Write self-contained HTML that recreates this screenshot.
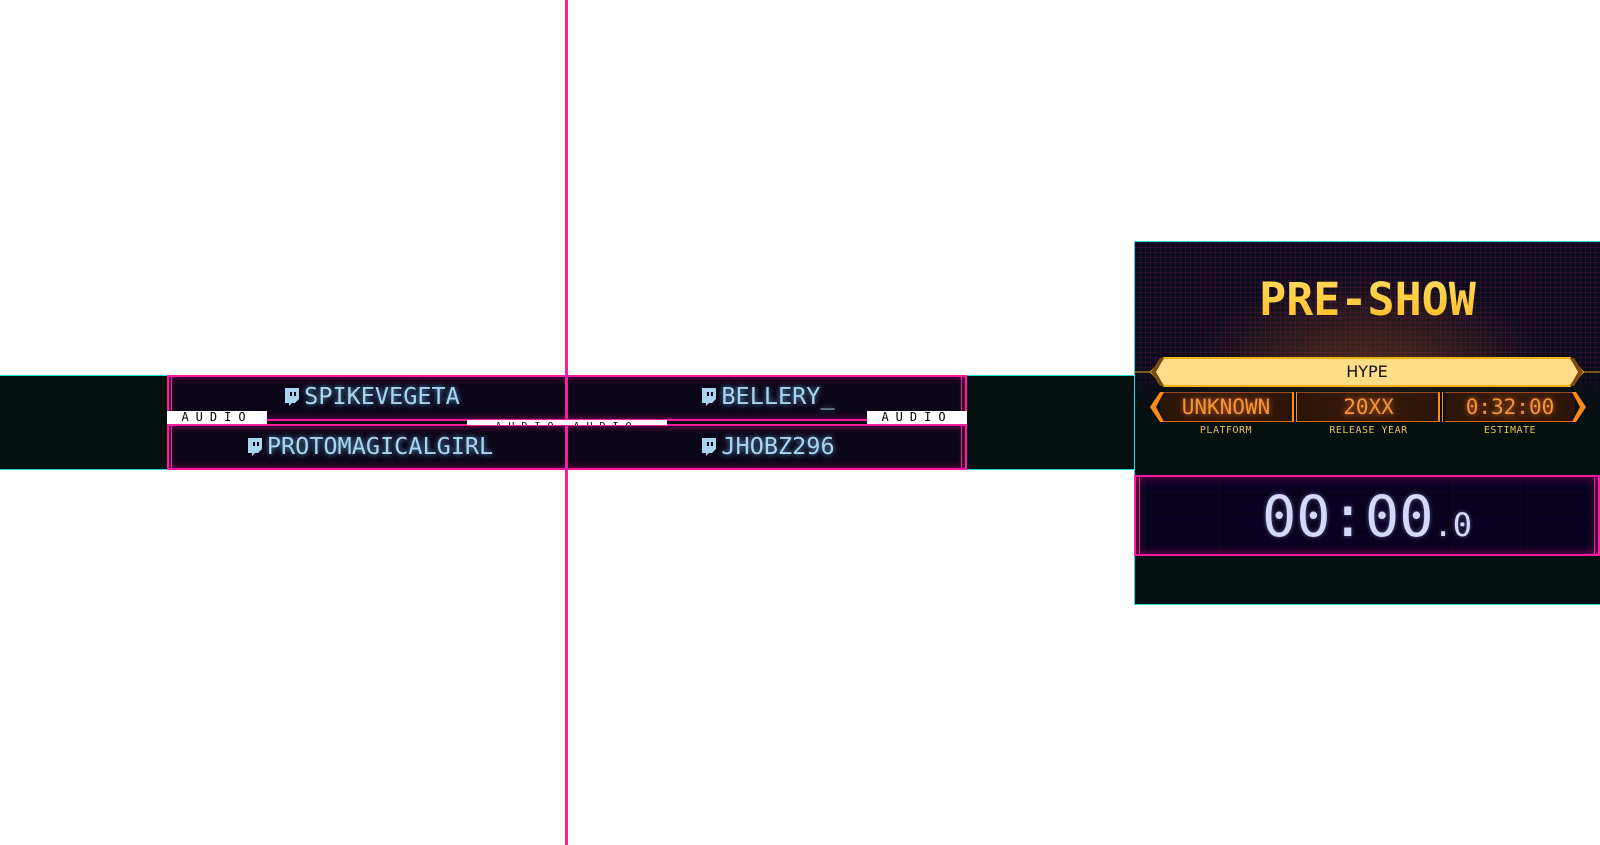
<!DOCTYPE html>
<html><head><meta charset="utf-8"><style>
*{margin:0;padding:0;box-sizing:border-box}
body{width:1600px;height:845px;background:#fff;position:relative;overflow:hidden;font-family:"DejaVu Sans Mono","Liberation Mono",monospace}
.abs{position:absolute}
.band{left:0;top:375px;width:1134px;height:95px;background:#061011;border-top:1px solid #2dd;border-bottom:1px solid #2dd}
.box{background:#0b0618;border:2px solid #ff1aa0;box-shadow:inset 0 0 8px rgba(255,0,160,.5)}
.name{color:#a9d6ee;font-size:23.5px;text-shadow:0 0 6px rgba(120,200,255,.8);display:flex;align-items:center;justify-content:center}
.name svg{margin-right:4px}
.audio{background:#fff;color:#000;font-size:12px;letter-spacing:7px;text-align:center;line-height:13px;height:13px}
.panel{left:1134px;top:241px;width:466px;height:364px;background:#061011;border:1px solid #2dd;border-right:none}
.grid{left:1135px;top:242px;width:465px;height:160px;background:
linear-gradient(rgba(255,0,200,.12) 1px,transparent 1px) 0 0/5px 5px,
linear-gradient(90deg,rgba(255,0,200,.12) 1px,transparent 1px) 0 0/5px 5px,
radial-gradient(ellipse at 50% 85%,rgba(200,110,20,.35),transparent 55%),#0b0e19;
-webkit-mask-image:linear-gradient(#000 75%,transparent)}
.cell{top:392px;height:30px;background:linear-gradient(90deg,#2a1408,#3a1c0c,#2a1408);border-top:1px solid #a04a10;border-bottom:1px solid #e06a10;color:#f3953a;font-size:21px;text-align:center;line-height:29px;text-shadow:0 0 6px rgba(255,120,30,.8)}
.lbl{top:425px;color:#e9c14a;font-size:10px;text-align:center;letter-spacing:.5px}
</style></head><body>
<div class="abs band"></div>
<div class="abs box" style="left:167px;top:375px;width:800px;height:46px"></div>
<div class="abs box" style="left:167px;top:424px;width:800px;height:46px"></div>
<div class="abs" style="left:171px;top:375px;width:1px;height:95px;background:#ff1aa0"></div>
<div class="abs" style="left:961px;top:375px;width:1px;height:95px;background:#ff1aa0"></div>
<div class="abs" style="left:565px;top:0;width:3px;height:845px;background:#ff1aa0"></div>

<div class="abs name" style="left:172px;top:380px;width:399px;height:32px"><svg width="17" height="19" viewBox="0 0 17 19"><path d="M2 1h14v11l-4 4h-3l-3 3v-3H2z" fill="#a9d6ee"/><path d="M8 5v4M12 5v4" stroke="#0b0618" stroke-width="2"/></svg>SPIKEVEGETA</div>
<div class="abs name" style="left:568px;top:380px;width:399px;height:32px"><svg width="17" height="19" viewBox="0 0 17 19"><path d="M2 1h14v11l-4 4h-3l-3 3v-3H2z" fill="#a9d6ee"/><path d="M8 5v4M12 5v4" stroke="#0b0618" stroke-width="2"/></svg>BELLERY_</div>
<div class="abs name" style="left:170px;top:430px;width:399px;height:32px"><svg width="17" height="19" viewBox="0 0 17 19"><path d="M2 1h14v11l-4 4h-3l-3 3v-3H2z" fill="#a9d6ee"/><path d="M8 5v4M12 5v4" stroke="#0b0618" stroke-width="2"/></svg>PROTOMAGICALGIRL</div>
<div class="abs name" style="left:568px;top:430px;width:399px;height:32px"><svg width="17" height="19" viewBox="0 0 17 19"><path d="M2 1h14v11l-4 4h-3l-3 3v-3H2z" fill="#a9d6ee"/><path d="M8 5v4M12 5v4" stroke="#0b0618" stroke-width="2"/></svg>JHOBZ296</div>

<div class="abs audio" style="left:167px;top:411px;width:100px">AUDIO</div>
<div class="abs audio" style="left:867px;top:411px;width:100px">AUDIO</div>
<div class="abs audio" style="left:467px;top:420px;width:200px;height:5px;overflow:hidden;font-size:10px">AUDIO AUDIO</div>

<div class="abs panel"></div>
<div class="abs grid"></div>
<div class="abs" style="left:1135px;top:268px;width:465px;text-align:center;font-size:45px;font-weight:bold;line-height:64px;background:linear-gradient(#ffe066,#ffb81c);-webkit-background-clip:text;color:transparent">PRE-SHOW</div>

<svg class="abs" style="left:1134px;top:356px" width="466" height="32">
<line x1="0" y1="16" x2="466" y2="16" stroke="#d4a020" stroke-width="1"/>
<polygon points="30,2 436,2 449,16 436,30 30,30 17,16" fill="#ffdd88" stroke="#f0b010" stroke-width="2"/>
<polygon points="30,2 22,16 30,30 26,30 17,16 26,2" fill="#7a4a10"/>
<polygon points="436,2 444,16 436,30 440,30 449,16 440,2" fill="#7a4a10"/>
</svg>
<div class="abs" style="left:1134px;top:362px;width:466px;text-align:center;font-size:16px;color:#111;font-family:'DejaVu Sans',sans-serif">HYPE</div>

<div class="abs cell" style="left:1160px;width:132px">UNKNOWN</div>
<div class="abs cell" style="left:1297px;width:143px">20XX</div>
<div class="abs cell" style="left:1445px;width:130px">0:32:00</div>
<svg class="abs" style="left:1148px;top:392px" width="440" height="30">
<polygon points="12,0 2,15 12,30 16,30 8,15 16,0" fill="#ff8a1a"/>
<polygon points="428,0 438,15 428,30 424,30 432,15 424,0" fill="#ff8a1a"/>
<rect x="144" y="0" width="2" height="30" fill="#ff8a1a"/><rect x="148" y="0" width="1" height="30" fill="#ff8a1a"/>
<rect x="290" y="0" width="2" height="30" fill="#ff8a1a"/><rect x="294" y="0" width="1" height="30" fill="#ff8a1a"/>
</svg>
<div class="abs lbl" style="left:1160px;width:132px">PLATFORM</div>
<div class="abs lbl" style="left:1297px;width:143px">RELEASE YEAR</div>
<div class="abs lbl" style="left:1445px;width:130px">ESTIMATE</div>

<div class="abs" style="left:1134px;top:475px;width:466px;height:81px;border:2px solid #ff1aa0;background:
linear-gradient(90deg,rgba(0,0,0,.5) 1px,transparent 1px) 12px 0/75px 100%,
linear-gradient(rgba(0,0,0,.5) 1px,transparent 1px) 0 18px/100% 18px,#0a0220;box-shadow:inset 0 0 10px rgba(255,0,160,.5)"></div>
<div class="abs" style="left:1139px;top:475px;width:1px;height:81px;background:#ff1aa0"></div>
<div class="abs" style="left:1594px;top:475px;width:1px;height:81px;background:#ff1aa0"></div>
<div class="abs" style="left:1134px;top:484px;width:466px;text-align:center;color:#d4d8fa;font-size:57px;line-height:66px;text-shadow:0 0 4px rgba(180,180,255,.5)">00:00<span style="font-size:32px">.0</span></div>
</body></html>
